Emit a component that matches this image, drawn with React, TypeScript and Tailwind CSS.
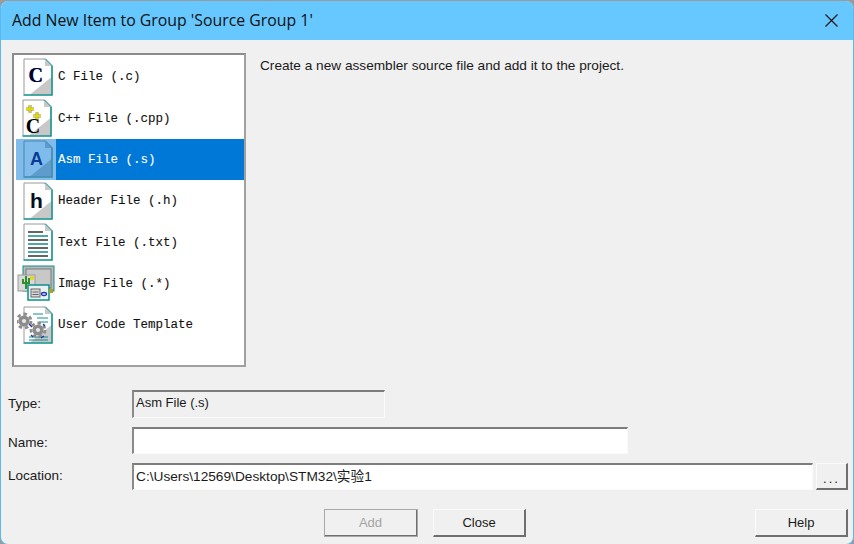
import React from 'react';

const items = [
  { label: 'C File (.c)', icon: 'c' },
  { label: 'C++ File (.cpp)', icon: 'cpp' },
  { label: 'Asm File (.s)', icon: 'asm', selected: true },
  { label: 'Header File (.h)', icon: 'h' },
  { label: 'Text File (.txt)', icon: 'txt' },
  { label: 'Image File (.*)', icon: 'img' },
  { label: 'User Code Template', icon: 'tpl' },
];

function Gear({ x, y, r, fill }: { x: number; y: number; r: number; fill: string }) {
  return (
    <g>
      <circle cx={x} cy={y} r={r} fill="none" stroke={fill} strokeWidth={r * 0.4} strokeDasharray={`${r * 0.5} ${r * 0.42}`} />
      <circle cx={x} cy={y} r={r * 0.8} fill={fill} />
      <circle cx={x} cy={y} r={r * 0.3} fill="#e8e8e8" />
    </g>
  );
}

function Page({ selected, shade = true }: { selected?: boolean; shade?: boolean }) {
  const paper = selected ? '#7fbcec' : '#ffffff';
  const fold = selected ? '#5f9ccc' : '#c8c8c8';
  const edge = selected ? '#3d8aa8' : '#0f8f8a';
  return (
    <g>
      <path d="M1.5 1.5H22L28.5 8V36.5H1.5Z" fill={paper} />
      {shade && <path d="M28.5 19V36.5H7Z" fill={fold} />}
      <path d="M1 36.5V1H22" fill="none" stroke={selected ? '#4f86b0' : '#9a9a9a'} strokeWidth="1" />
      <path d="M22 1L29 8V37H0.5" fill="none" stroke={edge} strokeWidth="1.6" />
      <path d="M22 1V8H29Z" fill={fold} />
    </g>
  );
}

function FileIcon({ kind, selected }: { kind: string; selected?: boolean }) {
  if (kind === 'img') {
    return (
      <svg width="38" height="36" viewBox="0 0 38 36" className="shrink-0">
        <rect x="6" y="1" width="31" height="25" fill="#b9b9b9" stroke="#0f8f8a" strokeWidth="1" />
        <rect x="9" y="4" width="25" height="19" fill="#c8c8c8" stroke="#7a7a7a" strokeWidth="1" />
        <rect x="1" y="10" width="17" height="16" fill="#d9d9d9" stroke="#9a9a9a" strokeWidth="1" />
        <path d="M9 11V24M6 14V18H12V13" fill="none" stroke="#2f8f2f" strokeWidth="2" />
        <circle cx="15" cy="13" r="2" fill="#e8d800" />
        <rect x="11" y="20" width="21" height="15" fill="#e8f2f2" stroke="#0f8f8a" strokeWidth="1.5" />
        <rect x="14" y="24" width="9" height="8" fill="#d8d8d8" stroke="#666" strokeWidth="1" />
        <path d="M15.5 27H21.5M15.5 29.5H21.5" stroke="#666" strokeWidth="1" />
        <ellipse cx="27" cy="29" rx="2.5" ry="1.5" fill="none" stroke="#2030b0" strokeWidth="1.3" />
        <rect x="32" y="24" width="4" height="4" fill="#b0a020" />
      </svg>
    );
  }
  if (kind === 'tpl') {
    return (
      <svg width="38" height="38" viewBox="-6 0 38 38" className="shrink-0">
        <Page />
        <path d="M10 8H20M14 12H25M16 16H25M6 31H25M6 34H25" stroke="#0f8f8a" strokeWidth="1" />
        <Gear x={1} y={15} r={7} fill="#8c8c8c" />
        <Gear x={15} y={24} r={7} fill="#8c8c8c" />
        <path d="M6 18L9 21M8 29L10 31M20 18L22 20M21 30L18 32" stroke="#2030b0" strokeWidth="1.2" />
      </svg>
    );
  }
  return (
    <svg width="30" height="38" viewBox="0 0 30 38" className={`shrink-0 ${kind === 'cpp' ? 'ml-[1px]' : 'ml-[3px]'}`}>
      <Page selected={selected} shade={kind !== 'txt'} />
      {kind === 'c' && (
        <g fontFamily="'Liberation Serif', serif" fontWeight="700" fontSize="20" textAnchor="middle">
          <text x="12.4" y="24" fill="#2030d0">C</text>
          <text x="13" y="24" fill="#000020">C</text>
        </g>
      )}
      {kind === 'cpp' && (
        <g>
          <path d="M4 10H12M8 6V14M11 17H19M15 13V21" stroke="#8a8a8a" strokeWidth="3" />
          <path d="M4 10H12M8 6V14M11 17H19M15 13V21" stroke="#e6d800" strokeWidth="1.8" />
          <text x="11" y="33.5" textAnchor="middle" fontFamily="'Liberation Serif', serif" fontWeight="700" fontSize="20" fill="#000">C</text>
        </g>
      )}
      {kind === 'asm' && (
        <text x="13.5" y="25" textAnchor="middle" fontFamily="'Liberation Sans', sans-serif" fontWeight="700" fontSize="18" fill="#0a3c96">A</text>
      )}
      {kind === 'h' && (
        <text x="13.5" y="26" textAnchor="middle" fontFamily="'Liberation Sans', sans-serif" fontWeight="700" fontSize="21" fill="#00101e">h</text>
      )}
      {kind === 'txt' && (
        <g fill="none" strokeWidth="1.3">
          <path d="M5 9H20M5 17H25M5 25H25M5 33H25" stroke="#333" />
          <path d="M5 13H25M5 21H25M5 29H25" stroke="#0f8f8a" />
        </g>
      )}
    </svg>
  );
}

function Field({ className, children, disabled }: { className: string; children?: React.ReactNode; disabled?: boolean }) {
  return (
    <div
      className={`h-[27px] border-t-2 border-l-2 border-b border-r border-t-[#7d7d7d] border-l-[#8a8a8a] border-b-[#fbfbfb] border-r-[#fbfbfb] pl-[2px] flex items-center text-[13px] leading-none text-[#1a1a1a] ${disabled ? 'bg-[#f0f0f0]' : 'bg-white'} ${className}`}
    >
      {children}
    </div>
  );
}

function Btn({ label, className, disabled }: { label: string; className: string; disabled?: boolean }) {
  return (
    <button
      className={`h-[28px] bg-[#f0f0f0] flex items-center justify-center text-[13px] border-t border-l border-b-2 border-r-2 border-t-[#fafafa] border-l-[#fafafa] border-b-[#6f6f6f] border-r-[#6f6f6f] ${disabled ? 'text-[#a3a3a3] outline outline-1 -outline-offset-1 outline-[#a8a8a8]' : 'text-[#1a1a1a]'} ${className}`}
    >
      {label}
    </button>
  );
}

export default function App() {
  return (
    <div className="w-[854px] h-[544px] bg-[#9a9a9a] overflow-hidden" style={{ fontFamily: "'Liberation Sans', Arial, sans-serif" }}>
      <div className="w-full h-full mt-[1px] rounded-t-[8px] rounded-b-[8px] overflow-hidden bg-[#f0f0f0] border-x border-b border-[#5cb8ee] flex flex-col">
        <div className="h-[39px] bg-[#66c8ff] shrink-0 flex items-center justify-between pl-[11px] pr-[15px]">
          <span className="text-[15.85px] text-[#101010] pt-[1px]" style={{ fontFamily: "'Open Sans', sans-serif" }}>Add New Item to Group 'Source Group 1'</span>
          <svg width="13" height="13" viewBox="0 0 13 13"><path d="M0.5 0.5L12.5 12.5M12.5 0.5L0.5 12.5" stroke="#111" strokeWidth="1.1" /></svg>
        </div>

        <div className="flex gap-[14px] pl-[11px] pt-[13px] h-[340px] shrink-0">
          <div className="w-[234px] h-[314px] border-2 border-t-[#8c8c8c] border-l-[#8c8c8c] border-b-[#a0a0a0] border-r-[#a0a0a0] bg-white pt-[1px] pl-[2px] pr-0">
            {items.map((it) => (
              <div key={it.label} className="h-[41.33px] flex items-center">
                <div className={`w-[40px] h-full flex items-center justify-center shrink-0 ${it.selected ? 'bg-[#7fbcec]' : ''}`}>
                  <FileIcon kind={it.icon} selected={it.selected} />
                </div>
                <div
                  className={`flex-1 h-full flex items-center pl-[2px] pt-[2px] text-[12.5px] whitespace-pre [-webkit-text-stroke:0.1px] ${it.selected ? 'bg-[#0078d7] text-white' : 'text-[#111]'}`}
                  style={{ fontFamily: "'Liberation Mono', monospace" }}
                >
                  {it.label}
                </div>
              </div>
            ))}
          </div>
          <p className="text-[13.65px] leading-none pt-[6px] text-[#1a1a1a]">Create a new assembler source file and add it to the project.</p>
        </div>

        <div className="pl-[7px] pt-[10px] flex flex-col">
          <div className="flex items-start h-[37px]">
            <span className="w-[124px] text-[13.5px] pt-[7px] leading-none text-[#1a1a1a]">Type:</span>
            <Field className="w-[253px] !h-[28px] !items-start pt-[4px]" disabled>Asm File (.s)</Field>
          </div>
          <div className="flex items-start h-[36px]">
            <span className="w-[124px] text-[13.5px] pt-[9px] leading-none text-[#1a1a1a]">Name:</span>
            <Field className="w-[496px]" />
          </div>
          <div className="flex items-start h-[46px]">
            <span className="w-[124px] text-[13.5px] pt-[6px] leading-none text-[#1a1a1a]">Location:</span>
            <Field className="w-[681px]">
              <span className="text-[13.7px] -mt-[1px]" style={{ fontFamily: "'Liberation Sans', 'Noto Sans CJK SC', sans-serif" }}>C:\Users\12569\Desktop\STM32\实验1</span>
            </Field>
            <Btn label="..." className="w-[32px] !h-[27px] ml-[3px] tracking-[2px] pt-[6px]" />
          </div>
          <div className="flex">
            <Btn label="Add" className="w-[94px] ml-[316px]" disabled />
            <Btn label="Close" className="w-[93px] ml-[15px]" />
            <Btn label="Help" className="w-[93px] ml-[229px]" />
          </div>
        </div>
      </div>
    </div>
  );
}
